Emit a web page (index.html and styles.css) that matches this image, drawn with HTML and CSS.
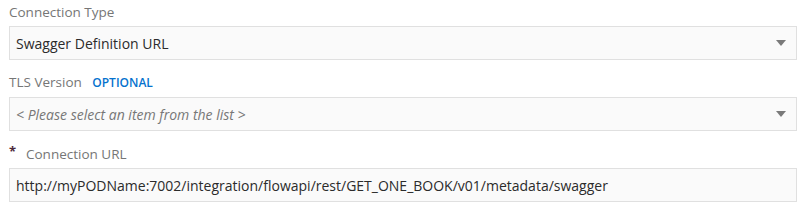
FILE: index.html
```html
<!DOCTYPE html>
<html lang="en">
<head>
    <meta charset="UTF-8">
    <title>Connection Properties</title>
    <link rel="stylesheet" href="styles.css">
</head>
<body>
    <div class="form">
        <div class="field">
            <div class="label">Connection Type</div>
            <div class="select">
                <span class="value">Swagger Definition URL</span>
                <span class="arrow"></span>
            </div>
        </div>
        <div class="field">
            <div class="label">TLS Version <span class="optional">OPTIONAL</span></div>
            <div class="select">
                <span class="value placeholder">&lt; Please select an item from the list &gt;</span>
                <span class="arrow"></span>
            </div>
        </div>
        <div class="field">
            <div class="label is-required"><span class="required">*</span>Connection URL</div>
            <div class="input">
                <span class="value">http://myPODName:7002/integration/flowapi/rest/GET_ONE_BOOK/v01/metadata/swagger</span>
            </div>
        </div>
    </div>
</body>
</html>
```

FILE: styles.css
```css
body {
    margin: 0;
    font-family: "Open Sans", "Noto Sans", sans-serif;
    background: #fff;
    color: #333;
}
.form {
    padding: 2px 3px 0 9px;
    display: flex;
    flex-direction: column;
    gap: 12px;
}
.field {
    display: flex;
    flex-direction: column;
    gap: 4px;
}
.label {
    font-size: 13.5px;
    color: #767676;
    line-height: 20px;
}
.label.is-required {
    margin-top: 1px;
}
.optional {
    color: #0572ce;
    font-size: 12px;
    font-weight: 600;
    margin-left: 7px;
}
.required {
    display: inline-block;
    width: 17px;
    color: #4d2a3a;
    font-weight: bold;
    font-size: 13px;
    vertical-align: 3px;
    line-height: 10px;
}
.select,
.input {
    height: 32px;
    border: 1px solid #e0e0e0;
    background: #fafafa;
    display: flex;
    align-items: center;
    justify-content: space-between;
    padding: 0 10px 0 6px;
}
.value {
    font-size: 14px;
    color: #2b2b2b;
}
.placeholder {
    font-style: italic;
    color: #777;
}
.arrow {
    width: 0;
    height: 0;
    border-left: 5px solid transparent;
    border-right: 5px solid transparent;
    border-top: 6px solid #7a7a7a;
}
```
